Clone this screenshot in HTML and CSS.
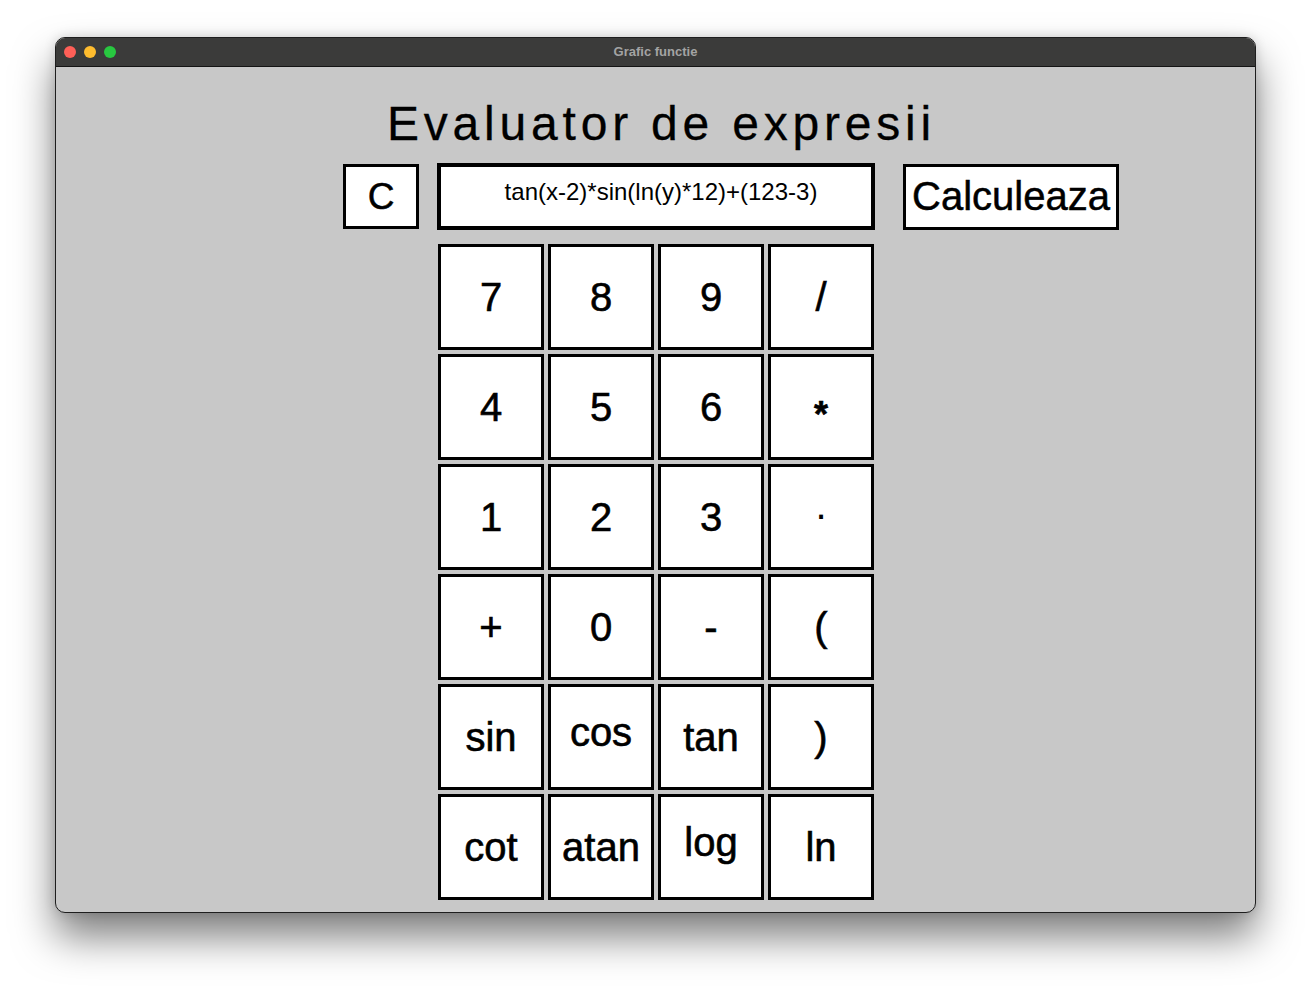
FILE: index.html
```html
<!DOCTYPE html>
<html lang="ro">
<head>
<meta charset="utf-8">
<title>Grafic functie</title>
<link rel="stylesheet" href="styles.css">
</head>
<body>
<div class="window">
  <div class="titlebar">
    <div class="lights">
      <span class="light red"></span>
      <span class="light yellow"></span>
      <span class="light green"></span>
    </div>
    <div class="wtitle">Grafic functie</div>
    <div></div>
  </div>
  <div class="content">
    <h1 class="heading">Evaluator de expresii</h1>
    <div class="toprow">
      <div class="btn clear">C</div>
      <div class="expr">tan(x-2)*sin(ln(y)*12)+(123-3)</div>
      <div class="btn calc">Calculeaza</div>
    </div>
    <div class="keypad">
      <div class="key">7</div>
      <div class="key">8</div>
      <div class="key">9</div>
      <div class="key">/</div>
      <div class="key">4</div>
      <div class="key">5</div>
      <div class="key">6</div>
      <div class="key star">*</div>
      <div class="key">1</div>
      <div class="key">2</div>
      <div class="key">3</div>
      <div class="key dot">.</div>
      <div class="key">+</div>
      <div class="key">0</div>
      <div class="key">-</div>
      <div class="key">(</div>
      <div class="key">sin</div>
      <div class="key lift">cos</div>
      <div class="key">tan</div>
      <div class="key">)</div>
      <div class="key">cot</div>
      <div class="key">atan</div>
      <div class="key lift">log</div>
      <div class="key">ln</div>
    </div>
  </div>
</div>
</body>
</html>
```

FILE: styles.css
```css
html {
  margin: 0;
  padding: 0;
  background: #ffffff;
  min-height: 100%;
}

body {
  margin: 0;
  box-sizing: border-box;
  min-height: 987px;
  padding: 37px 0 0 55px;
  font-family: "Liberation Sans", Arial, sans-serif;
  background: #ffffff;
}

.window {
  box-sizing: border-box;
  width: 1201px;
  height: 876px;
  border: 1px solid #1e1e1e;
  border-radius: 10px;
  overflow: hidden;
  background: #c8c8c8;
  box-shadow: 0 24px 40px rgba(0, 0, 0, 0.5), 0 0 12px rgba(0, 0, 0, 0.15);
}

.titlebar {
  height: 28px;
  background: #3b3b3a;
  border-bottom: 1px solid #141414;
  display: grid;
  grid-template-columns: 1fr auto 1fr;
  align-items: center;
}

.lights {
  display: flex;
  gap: 8px;
  padding-left: 8px;
}

.light {
  width: 12px;
  height: 12px;
  border-radius: 50%;
  display: block;
}

.red { background: #fe5f57; }
.yellow { background: #febc2e; }
.green { background: #28c840; }

.wtitle {
  color: #a3a3a3;
  font-size: 13px;
  font-weight: bold;
  padding-bottom: 2px;
}

.content {
  padding-top: 29px;
}

.heading {
  margin: 0;
  height: 55px;
  line-height: 55px;
  font-size: 48px;
  font-weight: normal;
  letter-spacing: 4.8px;
  text-align: center;
  padding-left: 12px;
  color: #000;
  -webkit-text-stroke: 0.3px #000;
}

.toprow {
  margin-top: 12px;
  display: flex;
  align-items: flex-start;
  padding-left: 287px;
}

.btn {
  box-sizing: border-box;
  background: #fff;
  border: 3px solid #000;
  display: flex;
  align-items: center;
  justify-content: center;
  color: #000;
  -webkit-text-stroke: 0.5px #000;
}

.clear {
  width: 76px;
  height: 65px;
  margin-top: 1px;
  font-size: 37px;
}

.expr {
  box-sizing: border-box;
  width: 438px;
  height: 67px;
  margin-left: 18px;
  background: #fff;
  border: 4px solid #000;
  padding: 11px 0 0 10px;
  line-height: 28px;
  font-size: 24px;
  text-align: center;
  color: #000;
  white-space: nowrap;
}

.calc {
  width: 216px;
  height: 66px;
  margin-top: 1px;
  margin-left: 28px;
  font-size: 40px;
  padding-bottom: 2px;
}

.keypad {
  margin-top: 14px;
  margin-left: 382px;
  display: grid;
  grid-template-columns: repeat(4, 106px);
  grid-auto-rows: 106px;
  gap: 4px;
}

.key {
  box-sizing: border-box;
  background: #fff;
  border: 3px solid #000;
  display: flex;
  align-items: center;
  justify-content: center;
  font-size: 40px;
  color: #000;
  -webkit-text-stroke: 0.6px #000;
}

.key.lift {
  padding-bottom: 10px;
}

.key.dot {
  padding-bottom: 24px;
  -webkit-text-stroke: 0;
}

.key.star {
  padding-top: 16px;
  font-weight: bold;
  font-size: 36px;
}
```
